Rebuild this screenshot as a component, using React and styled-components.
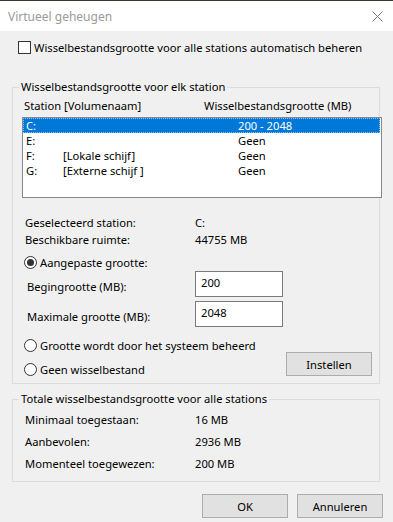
import React from "react";
import styled, { createGlobalStyle } from "styled-components";

const GlobalStyle = createGlobalStyle`
  body {
    margin: 0;
    background: #f0f0f0;
    font-family: "Noto Sans", "Open Sans", sans-serif;
    font-size: 11.2px;
    color: #000;
  }
`;

const Window = styled.div`
  width: 393px;
  height: 522px;
  background: #f0f0f0;
  display: flex;
  flex-direction: column;
  overflow: hidden;
`;

const TitleBar = styled.div`
  height: 30px;
  border-top: 1px solid #3f352b;
  background: #fff;
  display: flex;
  align-items: center;
  justify-content: space-between;
  padding: 0 10px 0 8px;
  color: #9a9a9a;
  font-size: 12px;
`;

const Body = styled.div`
  padding: 0 10px 0 12px;
  display: flex;
  flex-direction: column;
`;

const CheckRow = styled.label`
  display: flex;
  align-items: center;
  gap: 3px;
  height: 16px;
  margin: 8px 0 0 6px;
`;

const CheckBox = styled.span`
  width: 11px;
  height: 11px;
  border: 1px solid #333;
  background: #fff;
`;

const Group = styled.fieldset`
  margin: ${(p) => p.$top}px 0 0 0;
  width: 368px;
  box-sizing: border-box;
  min-width: 0;
  border: 1px solid #dcdcdc;
  padding: 0 0 ${(p) => p.$bottom}px 9px;
  display: flex;
  flex-direction: column;
`;

const Legend = styled.legend`
  padding: 0 2px;
  margin-left: -3px;
  line-height: 16px;
`;

const HeaderRow = styled.div`
  display: grid;
  grid-template-columns: 180px auto;
  padding-left: 2px;
  height: 16px;
  line-height: 16px;
  margin-top: 3px;
`;

const ListBox = styled.div`
  width: 360px;
  height: 81px;
  box-sizing: border-box;
  margin-top: 3px;
  border: 1px solid #828790;
  background: #fff;
`;

const ListRow = styled.div`
  display: grid;
  grid-template-columns: 37px 175px auto;
  height: 15px;
  line-height: 15px;
  padding-left: 3px;
  margin-right: 1px;
  background: ${(p) => (p.$selected ? "#0078d7" : "transparent")};
  color: ${(p) => (p.$selected ? "#fff" : "#000")};
  outline: ${(p) => (p.$selected ? "1px dotted rgba(255,255,255,0.55)" : "none")};
  outline-offset: -1px;
`;

const InfoGrid = styled.div`
  display: grid;
  grid-template-columns: 170px auto;
  grid-auto-rows: ${(p) => p.$row}px;
  align-items: center;
  padding-left: 3px;
  margin-top: ${(p) => p.$top}px;
`;

const RadioRow = styled.label`
  display: flex;
  align-items: center;
  gap: 3px;
  height: 16px;
  padding-left: 2px;
  margin-top: ${(p) => p.$top || 0}px;
`;

const Radio = styled.span`
  width: 11px;
  height: 11px;
  border-radius: 50%;
  border: 1px solid #333;
  background: #fff;
  display: flex;
  align-items: center;
  justify-content: center;

  &::after {
    content: "";
    width: 7px;
    height: 7px;
    border-radius: 50%;
    background: ${(p) => (p.$checked ? "#333" : "transparent")};
  }
`;

const SizeRow = styled.div`
  display: grid;
  grid-template-columns: 168px 88px;
  align-items: center;
  padding-left: 5px;
  margin-top: ${(p) => p.$top}px;
`;

const SizeLabel = styled.span`
  padding-top: 4px;
`;

const TextBox = styled.div`
  height: 26px;
  box-sizing: border-box;
  border: 1px solid #7a7a7a;
  background: #fff;
  padding: 3px 0 0 5px;
  line-height: 16px;
`;

const BottomRow = styled.div`
  display: flex;
  justify-content: space-between;
  align-items: flex-end;
  margin-top: 10px;
`;

const RadioColumn = styled.div`
  display: flex;
  flex-direction: column;
  gap: 8px;
`;

const Button = styled.button`
  width: ${(p) => p.$w || 86}px;
  height: 24px;
  border: 1px solid #adadad;
  background: #e1e1e1;
  font: inherit;
  color: #000;
  padding: 0;
`;

const InstellenButton = styled(Button)`
  margin: 0 7px 1px 0;
`;

const Footer = styled.div`
  display: flex;
  justify-content: flex-end;
  gap: 9px;
  margin-top: 12px;
`;

const rows = [
  ["C:", "", "200 - 2048", true],
  ["E:", "", "Geen", false],
  ["F:", "[Lokale schijf]", "Geen", false],
  ["G:", "[Externe schijf ]", "Geen", false],
];

function CloseIcon() {
  return (
    <svg width="11" height="11" viewBox="0 0 11 11">
      <path d="M0.5 0.5L10.5 10.5M10.5 0.5L0.5 10.5" stroke="#7a7a7a" strokeWidth="1" />
    </svg>
  );
}

export default function App() {
  return (
    <Window>
      <GlobalStyle />
      <TitleBar>
        <span>Virtueel geheugen</span>
        <CloseIcon />
      </TitleBar>
      <Body>
        <CheckRow>
          <CheckBox />
          Wisselbestandsgrootte voor alle stations automatisch beheren
        </CheckRow>

        <Group $top={24} $bottom={6}>
          <Legend>Wisselbestandsgrootte voor elk station</Legend>
          <HeaderRow>
            <span>Station [Volumenaam]</span>
            <span>Wisselbestandsgrootte (MB)</span>
          </HeaderRow>
          <ListBox>
            {rows.map(([drive, name, size, sel]) => (
              <ListRow key={drive} $selected={sel}>
                <span>{drive}</span>
                <span>{name}</span>
                <span>{size}</span>
              </ListRow>
            ))}
          </ListBox>

          <InfoGrid $row={17} $top={16}>
            <span>Geselecteerd station:</span>
            <span>C:</span>
            <span>Beschikbare ruimte:</span>
            <span>44755 MB</span>
          </InfoGrid>

          <RadioRow $top={6}>
            <Radio $checked />
            Aangepaste grootte:
          </RadioRow>
          <SizeRow $top={1}>
            <SizeLabel>Begingrootte (MB):</SizeLabel>
            <TextBox>200</TextBox>
          </SizeRow>
          <SizeRow $top={4}>
            <SizeLabel>Maximale grootte (MB):</SizeLabel>
            <TextBox>2048</TextBox>
          </SizeRow>

          <BottomRow>
            <RadioColumn>
              <RadioRow>
                <Radio />
                Grootte wordt door het systeem beheerd
              </RadioRow>
              <RadioRow>
                <Radio />
                Geen wisselbestand
              </RadioRow>
            </RadioColumn>
            <InstellenButton>Instellen</InstellenButton>
          </BottomRow>
        </Group>

        <Group $top={7} $bottom={7}>
          <Legend>Totale wisselbestandsgrootte voor alle stations</Legend>
          <InfoGrid $row={22} $top={1}>
            <span>Minimaal toegestaan:</span>
            <span>16 MB</span>
            <span>Aanbevolen:</span>
            <span>2936 MB</span>
            <span>Momenteel toegewezen:</span>
            <span>200 MB</span>
          </InfoGrid>
        </Group>

        <Footer>
          <Button>OK</Button>
          <Button>Annuleren</Button>
        </Footer>
      </Body>
    </Window>
  );
}
